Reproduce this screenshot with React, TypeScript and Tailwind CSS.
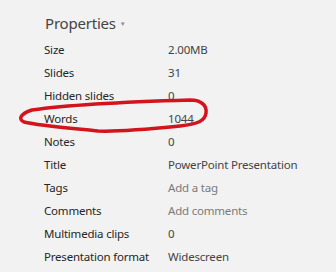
import React from 'react';

type Row = { label: string; value: string; muted?: boolean };

const ROWS: Row[] = [
  { label: 'Size', value: '2.00MB' },
  { label: 'Slides', value: '31' },
  { label: 'Hidden slides', value: '0' },
  { label: 'Words', value: '1044' },
  { label: 'Notes', value: '0' },
  { label: 'Title', value: 'PowerPoint Presentation' },
  { label: 'Tags', value: 'Add a tag', muted: true },
  { label: 'Comments', value: 'Add comments', muted: true },
  { label: 'Multimedia clips', value: '0' },
  { label: 'Presentation format', value: 'Widescreen' },
];

const App: React.FC = () => {
  return (
    <div
      className="relative w-[336px] h-[272px] overflow-hidden bg-[#f2f2f2] pl-[44px] pt-[12px]"
      style={{ fontFamily: '"Noto Sans", "Open Sans", sans-serif' }}
    >
      {/* Header */}
      <div className="flex items-center h-[22px] pl-[1px]">
        <span className="text-[15px] text-[#444444] leading-none tracking-[-0.2px]">Properties</span>
        <span className="ml-[4px] mt-[1px] text-[6px] text-[#8a8a8a] leading-none">▼</span>
      </div>

      {/* Property list */}
      <div className="mt-[4px] flex flex-col">
        {ROWS.map((row) => (
          <div key={row.label} className="flex items-center h-[23px] text-[11.5px] leading-none tracking-[-0.2px]">
            <span className="w-[124px] shrink-0 text-[#262626]">{row.label}</span>
            <span className={row.muted ? 'text-[#7a7a7a]' : 'text-[#444444]'}>{row.value}</span>
          </div>
        ))}
      </div>

      {/* Hand-drawn red loop around "Words" */}
      <svg className="absolute left-0 top-0 pointer-events-none" width="336" height="272" viewBox="0 0 336 272">
        <path
          d="M32 110 C 60 106, 120 102, 190 100 C 202 100, 207 106, 206 113 C 205 121, 198 124, 180 126 C 150 129, 120 132, 98 131 C 80 129, 40 126, 24 122 C 18 119, 20 114, 32 110 Z"
          fill="none"
          stroke="#d3141c"
          strokeWidth="3.5"
          strokeLinecap="round"
          strokeLinejoin="round"
        />
      </svg>
    </div>
  );
};

export default App;
